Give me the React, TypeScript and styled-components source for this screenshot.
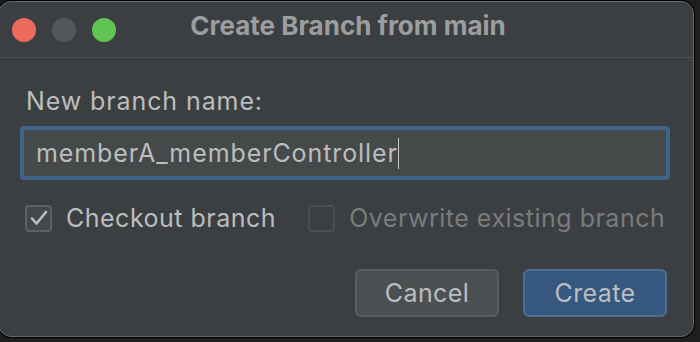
import React from "react";
import styled, { createGlobalStyle } from "styled-components";

const Global = createGlobalStyle`
  html, body {
    margin: 0;
    padding: 0;
    background: #1d1e1f;
    font-family: Inter, "Noto Sans", "Liberation Sans", sans-serif;
  }
  #root {
    width: 700px;
    height: 342px;
    overflow: hidden;
  }
`;

const Window = styled.div`
  margin: 1px 0 0 -2px;
  width: 696px;
  height: 336px;
  box-sizing: border-box;
  background: #3c3f41;
  border: 1px solid #66696b;
  border-radius: 13px;
  box-shadow: 0 0 0 1px #000;
  display: flex;
  flex-direction: column;
  overflow: hidden;
`;

const TitleBar = styled.div`
  height: 55px;
  flex-shrink: 0;
  display: flex;
  align-items: center;
  position: relative;
  border-bottom: 1px solid #4e5153;
`;

const Lights = styled.div`
  display: flex;
  gap: 16px;
  padding-left: 13px;
`;

const Light = styled.span<{ $color: string }>`
  width: 24px;
  height: 24px;
  border-radius: 50%;
  background: ${(p) => p.$color};
`;

const Title = styled.div`
  position: absolute;
  left: 0;
  right: 0;
  top: 8px;
  text-align: center;
  padding-left: 4px;
  font-size: 26px;
  line-height: 32px;
  font-weight: 700;
  color: #9c9d9e;
`;

const Body = styled.div`
  flex: 1;
  display: flex;
  flex-direction: column;
  padding: 28px 23px 0 21px;
  font-size: 25px;
  letter-spacing: 0.9px;
  color: #bcbdbe;
  white-space: nowrap;
`;

const Label = styled.div`
  padding-left: 6px;
  line-height: 30px;
  letter-spacing: 0.9px;
`;

const Field = styled.div`
  margin-top: 10px;
  height: 54px;
  box-sizing: border-box;
  border: 4px solid #3e6489;
  border-radius: 4px;
  background: #45494a;
  display: flex;
  align-items: center;
  padding-left: 12px;
  letter-spacing: 0.9px;
`;

const Caret = styled.span`
  display: inline-block;
  width: 1.5px;
  height: 31px;
  margin-left: 0;
  background: #c8c8c8;
`;

const Options = styled.div`
  margin-top: 23px;
  display: flex;
  align-items: center;
  gap: 32px;
  padding-left: 5px;
`;

const Option = styled.label<{ $disabled?: boolean }>`
  display: flex;
  align-items: center;
  flex-shrink: 0;
  gap: 14px;
  letter-spacing: 0.5px;
  color: ${(p) => (p.$disabled ? "#7a7b7c" : "#bcbdbe")};
`;

const Box = styled.span<{ $disabled?: boolean }>`
  width: 27px;
  height: 27px;
  box-sizing: border-box;
  border-radius: 4px;
  border: 2px solid ${(p) => (p.$disabled ? "#4c4f51" : "#5d6163")};
  background: ${(p) => (p.$disabled ? "#3c3f41" : "#43484a")};
  display: flex;
  align-items: center;
  justify-content: center;
`;

const Buttons = styled.div`
  margin-top: 36px;
  display: flex;
  justify-content: flex-end;
  gap: 24px;
  padding-right: 3px;
`;

const Button = styled.button<{ $primary?: boolean }>`
  width: 144px;
  height: 48px;
  box-sizing: border-box;
  border-radius: 6px;
  border: 2px solid ${(p) => (p.$primary ? "#4a6f93" : "#5b5e60")};
  background: ${(p) => (p.$primary ? "#365880" : "#4b4f51")};
  color: #bcbdbe;
  font-family: inherit;
  font-size: 25px;
  letter-spacing: 0.4px;
  padding: 0;
`;

export default function App() {
  return (
    <>
      <Global />
      <Window>
        <TitleBar>
          <Lights>
            <Light $color="#ec6a5e" />
            <Light $color="#53575a" />
            <Light $color="#61c554" />
          </Lights>
          <Title>Create Branch from main</Title>
        </TitleBar>
        <Body>
          <Label>New branch name:</Label>
          <Field>
            memberA_memberController
            <Caret />
          </Field>
          <Options>
            <Option>
              <Box>
                <svg width="18" height="16" viewBox="0 0 18 16" fill="none">
                  <path
                    d="M2 8.5 L6.5 13.5 L16 2"
                    stroke="#bcbdbe"
                    strokeWidth="2.6"
                    strokeLinecap="round"
                    strokeLinejoin="round"
                  />
                </svg>
              </Box>
              Checkout branch
            </Option>
            <Option $disabled>
              <Box $disabled />
              Overwrite existing branch
            </Option>
          </Options>
          <Buttons>
            <Button>Cancel</Button>
            <Button $primary>Create</Button>
          </Buttons>
        </Body>
      </Window>
    </>
  );
}
